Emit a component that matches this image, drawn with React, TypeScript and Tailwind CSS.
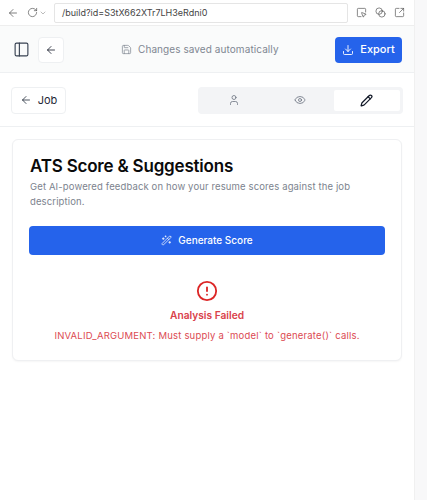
import { ArrowLeft, Blend, ChevronDown, CircleAlert, Download, Eye, PanelLeft, Pencil, RotateCw, Save, SquareArrowOutUpRight, SquareMousePointer, User, WandSparkles } from 'lucide-react'

export default function App() {
  return (
    <div className="flex h-[500px] w-[427px] overflow-hidden bg-white font-['Inter',sans-serif] text-[#0a0a0a]">
      <div className="w-[414px] shrink-0">
        <div className="flex h-[26px] items-center border-b border-[#eeeeee] bg-white pl-[7px]">
          <ArrowLeft className="h-[12px] w-[12px] text-[#555]" strokeWidth={1.5} />
          <RotateCw className="ml-[8px] h-[11px] w-[11px] text-[#555]" strokeWidth={1.5} />
          <ChevronDown className="ml-[1px] h-[8px] w-[8px] text-[#777]" strokeWidth={1.5} />
          <div className="ml-[7px] flex h-[20px] w-[294px] items-center rounded-[2px] border border-[#e5e5e5] pl-[7px] text-[9px] tracking-[0px] text-[#444]">
            /build?id=S3tX662XTr7LH3eRdni0
          </div>
          <div className="ml-[8px] flex items-center gap-[8px] text-[#555]">
            <SquareMousePointer className="h-[11px] w-[11px]" strokeWidth={1.5} />
            <Blend className="h-[11px] w-[11px]" strokeWidth={1.5} />
            <SquareArrowOutUpRight className="h-[11px] w-[11px]" strokeWidth={1.5} />
          </div>
        </div>

        <header className="flex h-[47px] items-center border-b border-[#eef0f2] bg-[#fafbfb] pt-[1px] pl-[13px] pr-[12px]">
          <PanelLeft className="h-[17px] w-[17px] text-[#374151]" strokeWidth={1.6} />
          <button className="ml-[8px] flex h-[26px] w-[26px] items-center justify-center rounded-[4px] border border-[#eef0f2] bg-white">
            <ArrowLeft className="h-[12px] w-[12px] text-[#111827]" strokeWidth={1.6} />
          </button>
          <div className="ml-[57px] flex items-center text-[10px] tracking-[0.08px] text-[#808792]">
            <Save className="mr-[6px] h-[11px] w-[11px]" strokeWidth={1.6} />
            Changes saved automatically
          </div>
          <button className="ml-auto flex h-[26px] w-[67px] items-center justify-center gap-[6px] rounded-[4px] bg-[#2563eb] text-[11px] font-medium text-white">
            <Download className="h-[12px] w-[12px]" strokeWidth={1.8} />
            Export
          </button>
        </header>

        <div className="flex h-[54px] items-center justify-between border-b border-[#eef0f2] pt-[1px] pl-[11px] pr-[11px]">
          <button className="flex h-[27px] w-[55px] items-center justify-center gap-[6px] rounded-[4px] border border-[#eef0f2] bg-white text-[11px] text-[#1f2937]">
            <ArrowLeft className="h-[12px] w-[12px]" strokeWidth={1.6} />
            Job
          </button>
          <div className="grid h-[27px] w-[205px] grid-cols-3 rounded-[4px] bg-[#f3f4f6] p-[3px]">
            <div className="flex items-center justify-center text-[#6b7280]">
              <User className="h-[12px] w-[12px]" strokeWidth={1.6} />
            </div>
            <div className="flex items-center justify-center text-[#6b7280]">
              <Eye className="h-[12px] w-[12px]" strokeWidth={1.6} />
            </div>
            <div className="flex items-center justify-center rounded-[2px] bg-white text-[#111827]">
              <Pencil className="h-[13px] w-[13px]" strokeWidth={2.2} />
            </div>
          </div>
        </div>

        <div className="px-[12px] pt-[12px]">
          <section className="h-[222px] w-[390px] rounded-[6px] border border-[#eff0f2] bg-white px-[16px] pt-[14px] shadow-[0_1px_2px_rgba(0,0,0,0.04)]">
            <h1 className="pl-[1px] text-[17px] leading-[24px] font-semibold tracking-[-0.2px] text-[#0a0a0a]">ATS Score &amp; Suggestions</h1>
            <p className="mt-[1px] pl-[1px] text-[9.5px] leading-[15px] tracking-[0.13px] text-[#7c838e]">
              Get AI-powered feedback on how your resume scores against the job description.
            </p>
            <button className="mt-[17px] flex h-[29px] w-full items-center justify-center gap-[6px] rounded-[4px] bg-[#2563eb] text-[10px] font-medium text-white">
              <WandSparkles className="h-[11px] w-[11px]" strokeWidth={1.6} />
              Generate Score
            </button>
            <div className="mt-[25px] flex flex-col items-center">
              <CircleAlert className="h-[22px] w-[22px] text-[#dc2626]" strokeWidth={2} />
              <div className="mt-[6px] text-[10.2px] leading-[14px] font-semibold text-[#d9414a]">Analysis Failed</div>
              <div className="mt-[7px] text-[9.5px] leading-[14px] tracking-[0.2px] whitespace-nowrap text-[#dc4a52]">
                INVALID_ARGUMENT: Must supply a `model` to `generate()` calls.
              </div>
            </div>
          </section>
        </div>
      </div>
      <div className="flex-1 border-l border-[#f0f0f0] bg-[#f8f8f9]" />
    </div>
  )
}
